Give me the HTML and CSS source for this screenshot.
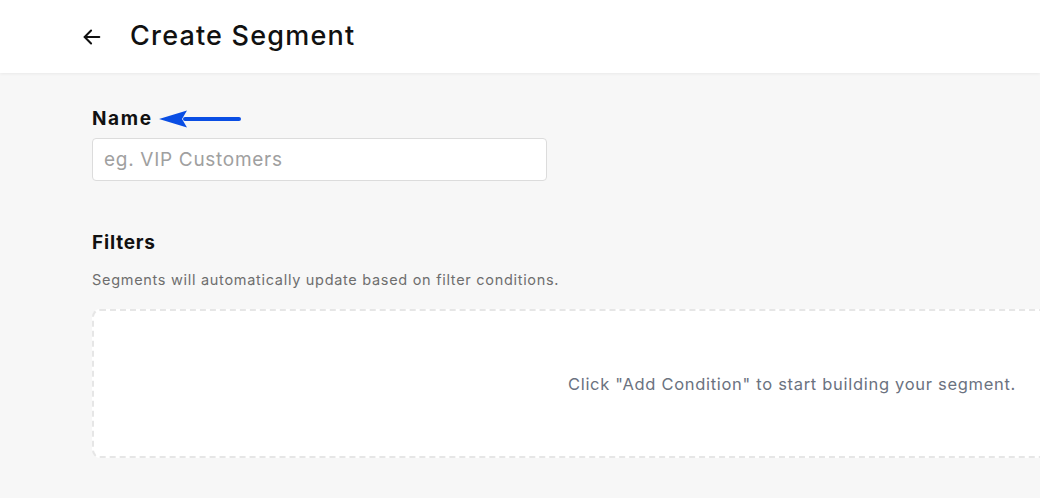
FILE: index.html
```html
<!DOCTYPE html>
<html>
	<head>
		<meta charset="UTF-8">
		<title>Create Segment</title>
		<link rel="stylesheet" href="styles.css">
	</head>
	<body>
		<div class="header">
			<span class="back">
				<svg width="22" height="22" viewBox="0 0 24 24" fill="none" stroke="#111" stroke-width="2.2" stroke-linecap="round" stroke-linejoin="round">
					<path d="M20 12H4"/>
					<path d="M11 5l-7 7 7 7"/>
				</svg>
			</span>
			<h1>Create Segment</h1>
		</div>

		<div class="main">
			<div class="field">
				<div class="labelrow">
					<label for="name">Name</label>
					<svg class="pointer" width="86" height="20" viewBox="0 0 86 20">
						<path d="M28 10H82" stroke="#0a4ee4" stroke-width="4" stroke-linecap="round"/>
						<path d="M2 10L30 1.5L25 10L30 18.5Z" fill="#0a4ee4"/>
					</svg>
				</div>
				<input id="name" type="text" placeholder="eg. VIP Customers">
			</div>

			<div class="filters">
				<h3>Filters</h3>
				<p class="hint">Segments will automatically update based on filter conditions.</p>
				<div class="empty">
					<p>Click "Add Condition" to start building your segment.</p>
				</div>
			</div>
		</div>
	</body>
</html>
```

FILE: styles.css
```css
html, body{margin:0;padding:0;}
body{
	background-color: #f7f7f7;
	font-family: "Inter", "Liberation Sans", sans-serif;
	color: #111;
	overflow: hidden;
	width: 1040px;
}

.header{
	height: 73px;
	background-color: #fff;
	box-shadow: 0 1px 3px rgba(0,0,0,.06);
	display: flex;
	align-items: center;
	padding-left: 81px;
	gap: 27px;
}
.header .back{display: flex;align-items: center;}
.header h1{
	margin: 0 0 2px;
	font-size: 27px;
	font-weight: 500;
	letter-spacing: 1.2px;
}

.main{padding: 32px 0 0 92px;}

.labelrow{display: flex;align-items: center;gap: 4px;height: 26px;}
.labelrow label{font-size: 19px;font-weight: 700;letter-spacing: 1.6px;}
.pointer{margin-top: 1px;}

.field input{
	display: block;
	margin-top: 7px;
	width: 455px;
	height: 43px;
	box-sizing: border-box;
	border: 1px solid #dcdcdc;
	border-radius: 4px;
	background: #fff;
	padding: 0 11px;
	font-family: inherit;
	font-size: 19px;
	letter-spacing: .7px;
	color: #333;
	outline: none;
}
.field input::placeholder{color: #a0a0a0;}

.filters{margin-top: 49px;}
.filters h3{margin: 0;font-size: 19px;font-weight: 700;line-height: 26px;letter-spacing: .8px;}
.filters .hint{
	margin: 14px 0 0;
	font-size: 14.5px;
	letter-spacing: .7px;
	color: #6e6e6e;
	line-height: 20px;
}

.empty{
	margin-top: 19px;
	width: 1400px;
	height: 149px;
	box-sizing: border-box;
	border: 2px dashed #e6e6e6;
	border-radius: 8px;
	background: #fff;
	display: flex;
	align-items: center;
	justify-content: center;
}
.empty p{margin: 0;font-size: 16.5px;letter-spacing: .7px;color: #6b7280;}
```
